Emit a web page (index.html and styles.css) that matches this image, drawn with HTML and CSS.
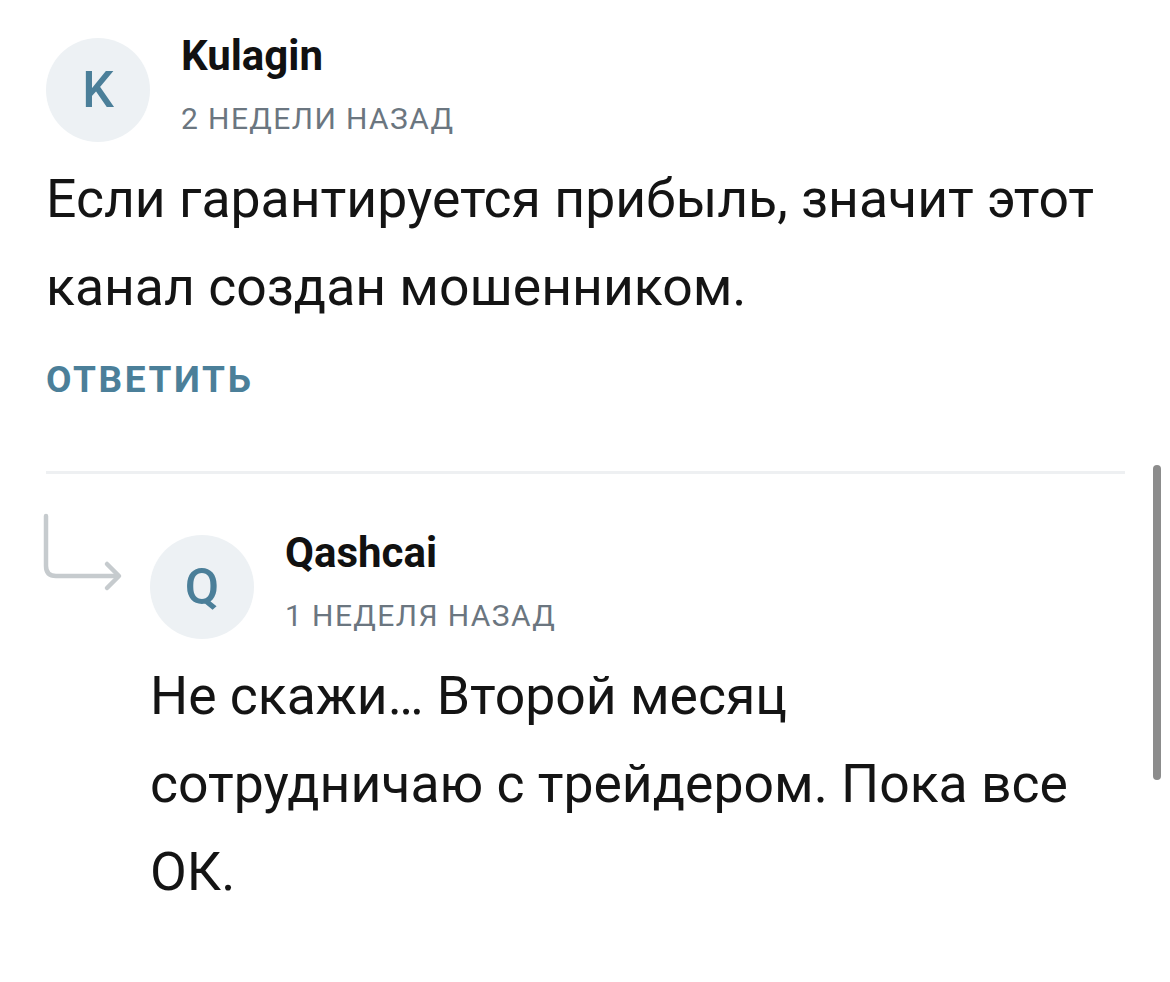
FILE: index.html
```html
<!DOCTYPE html>
<html lang="ru">

<head>
    <meta charset="UTF-8">
    <meta name="viewport" content="width=device-width, initial-scale=1.0">
    <title>Комментарии</title>
    <link rel="stylesheet" href="styles.css">
</head>

<body>
    <div class="comments">
        <!-- основной комментарий -->
        <div class="comment">
            <div class="head">
                <div class="avatar">K</div>
                <div class="info">
                    <div class="name">Kulagin</div>
                    <div class="time">2 недели назад</div>
                </div>
            </div>
            <p class="text">Если гарантируется прибыль, значит этот канал создан мошенником.</p>
            <a href="javascript:;" class="answer">Ответить</a>
        </div>

        <div class="line"></div>

        <!-- ответ -->
        <div class="reply">
            <svg class="reply_icon" width="106" height="82" viewBox="0 0 106 82">
                <path d="M3 4 V54 Q3 64 13 64 H75" fill="none" stroke="#c6cbce" stroke-width="4.5" stroke-linecap="round" stroke-linejoin="round" />
                <path d="M64 52 L76 64 L64 76" fill="none" stroke="#c6cbce" stroke-width="4.5" stroke-linecap="round" stroke-linejoin="round" />
            </svg>
            <div class="reply_body">
                <div class="head">
                    <div class="avatar">Q</div>
                    <div class="info">
                        <div class="name">Qashcai</div>
                        <div class="time">1 неделя назад</div>
                    </div>
                </div>
                <p class="text">Не скажи… Второй месяц сотрудничаю с трейдером. Пока все ОК.</p>
            </div>
        </div>
    </div>

    <div class="scrollbar"></div>
</body>

</html>
```

FILE: styles.css
```css
* {
    margin: 0;
    padding: 0;
    box-sizing: border-box;
}

body {
    background: #fff;
    font-family: Roboto, "Noto Sans", sans-serif;
    color: #111;
}

.comments {
    width: 1125px;
    padding: 38px 0 0 46px;
}

.head {
    display: flex;
    align-items: flex-start;
    gap: 31px;
}

.avatar {
    width: 104px;
    height: 104px;
    border-radius: 50%;
    background: #edf1f4;
    color: #4b7f99;
    font-size: 50px;
    font-weight: 500;
    line-height: 104px;
    text-align: center;
    flex-shrink: 0;
}

.info {
    margin-top: -6px;
}

.name {
    font-size: 42px;
    font-weight: 700;
    line-height: 48px;
    color: #111;
}

.time {
    margin-top: 21px;
    font-size: 30px;
    line-height: 36px;
    letter-spacing: 1.4px;
    text-transform: uppercase;
    color: #6b7680;
}

.text {
    margin-top: 13px;
    font-size: 53.5px;
    line-height: 88px;
    color: #141414;
}

.answer {
    display: inline-block;
    margin-top: 29px;
    font-size: 37px;
    font-weight: 700;
    line-height: 40px;
    letter-spacing: 2.6px;
    text-transform: uppercase;
    text-decoration: none;
    color: #4b7f99;
}

.line {
    height: 3px;
    margin-top: 71px;
    background: #eef0f2;
}

.reply {
    display: flex;
    margin-top: 38px;
    margin-left: -3px;
}

.reply_icon {
    flex-shrink: 0;
}

.reply_body {
    flex: 1;
    padding-top: 23px;
    margin-left: 1px;
    margin-right: 30px;
}

.scrollbar {
    position: fixed;
    top: 465px;
    left: 1153px;
    width: 8px;
    height: 315px;
    border-radius: 4px;
    background: #8c8c8c;
}
```
